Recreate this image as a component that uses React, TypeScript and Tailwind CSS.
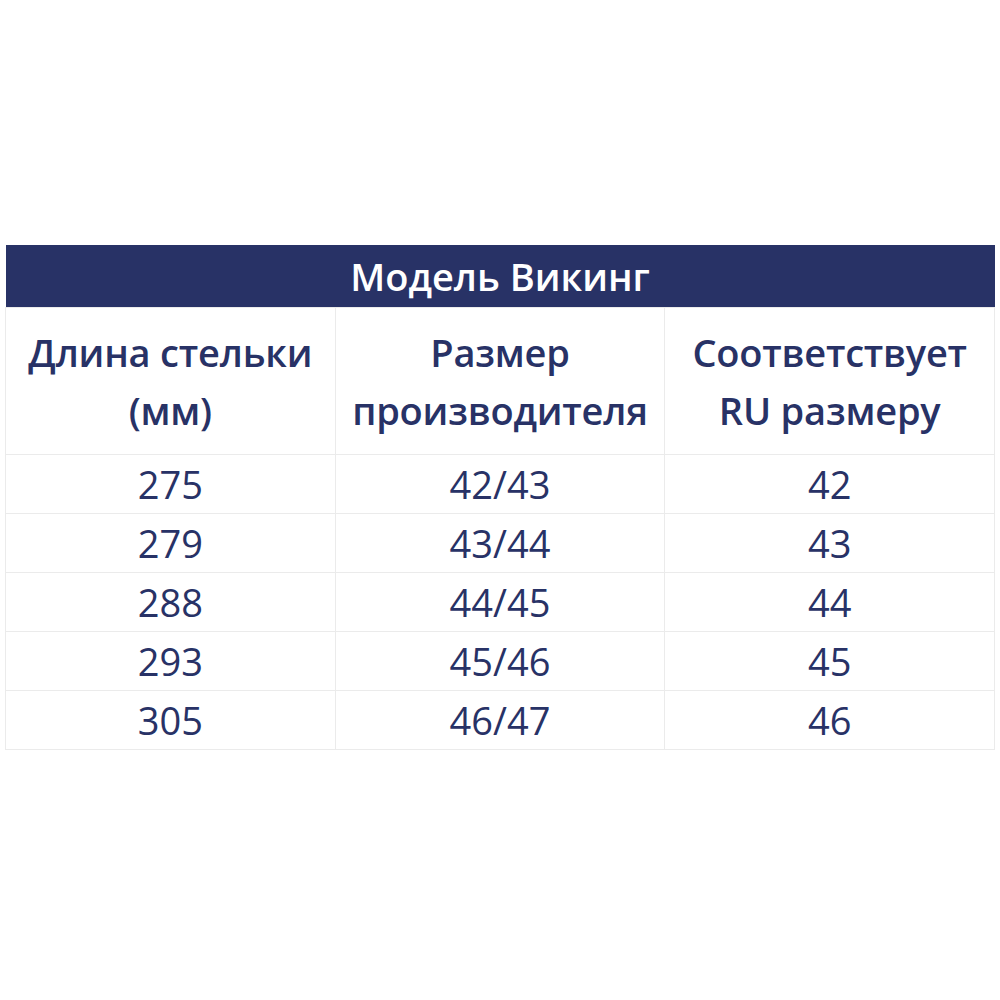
const rows = [
  ["275", "42/43", "42"],
  ["279", "43/44", "43"],
  ["288", "44/45", "44"],
  ["293", "45/46", "45"],
  ["305", "46/47", "46"],
];

export default function App() {
  return (
    <div className="flex h-[1000px] w-[1000px] items-start bg-white pt-[245px] pl-[5px] font-['Open_Sans',sans-serif] text-[#283266]">
      <table className="w-[990px] table-fixed border-collapse">
        <thead>
          <tr>
            <th
              colSpan={3}
              className="h-[62px] bg-[#283266] text-center text-[38px] font-semibold leading-none text-white"
            >
              Модель Викинг
            </th>
          </tr>
          <tr>
            {[
              ["Длина стельки", "(мм)"],
              ["Размер", "производителя"],
              ["Соответствует", "RU размеру"],
            ].map((lines, i) => (
              <th
                key={i}
                className="h-[147px] border border-[#ebebeb] text-center text-[38px] font-semibold leading-[58px] tracking-[-0.2px]"
              >
                {lines[0]}
                <br />
                {lines[1]}
              </th>
            ))}
          </tr>
        </thead>
        <tbody>
          {rows.map((r) => (
            <tr key={r[0]}>
              {r.map((c, i) => (
                <td
                  key={i}
                  className="h-[59px] border border-[#ebebeb] text-center text-[38px] leading-none"
                >
                  {c}
                </td>
              ))}
            </tr>
          ))}
        </tbody>
      </table>
    </div>
  );
}
